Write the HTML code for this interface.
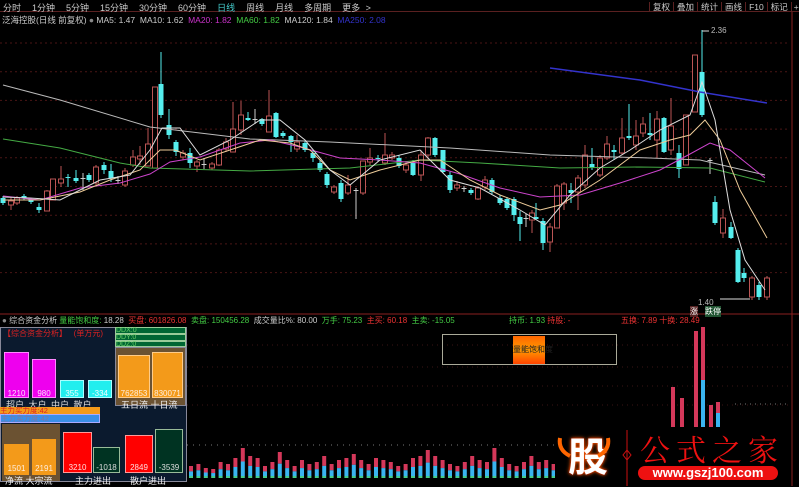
<!DOCTYPE html>
<html><head><meta charset="utf-8">
<style>
*{margin:0;padding:0;box-sizing:border-box}
body{width:799px;height:486px;background:#000;overflow:hidden;position:relative;font-family:"Liberation Sans","Noto Sans CJK SC",sans-serif;font-size:9px;color:#ccc}
.a{position:absolute;white-space:nowrap}
svg{position:absolute;left:0;top:0}
</style></head><body>
<svg id="s" width="799" height="486" viewBox="0 0 799 486"></svg>

<div class="a" style="left:0;top:0;width:799px;height:12px;border-bottom:1px solid #5a2020;"></div>
<div class="a" style="left:3px;top:1px;color:#ccc;word-spacing:3px">分时&nbsp; 1分钟&nbsp; 5分钟&nbsp; 15分钟&nbsp; 30分钟&nbsp; 60分钟&nbsp; <span style="color:#4cc">日线</span>&nbsp; 周线&nbsp; 月线&nbsp; 多周期&nbsp; 更多 &gt;</div>
<div class="a" style="left:649px;top:1px;color:#ccc;font-size:8.5px">
<span style="border-left:1px solid #5a2020;padding:0 3px">复权</span><span style="border-left:1px solid #5a2020;padding:0 3px">叠加</span><span style="border-left:1px solid #5a2020;padding:0 3px">统计</span><span style="border-left:1px solid #5a2020;padding:0 3px">画线</span><span style="border-left:1px solid #5a2020;padding:0 3px">F10</span><span style="border-left:1px solid #5a2020;padding:0 3px">标记</span><span style="border-left:1px solid #5a2020;padding:0 2px">+自选</span></div>
<div class="a" style="left:2px;top:14px;color:#ccc;font-size:8.5px">泛海控股(日线 前复权) <span style="color:#888">●</span> MA5: 1.47&nbsp; MA10: 1.62&nbsp; <span style="color:#c3c">MA20: 1.82</span>&nbsp; <span style="color:#4c4">MA60: 1.82</span>&nbsp; MA120: 1.84&nbsp; <span style="color:#33c">MA250: 2.08</span></div>
<div class="a" style="left:711px;top:26px;color:#bbb;font-size:8px">2.36</div>
<div class="a" style="left:698px;top:298px;color:#bbb;font-size:8px">1.40</div>
<div class="a" style="left:690px;top:306px;font-size:8px;color:#fff;background:#522">涨</div>
<div class="a" style="left:705px;top:306px;font-size:8px;color:#fff;background:#253">跌停</div>

<div class="a" style="left:2px;top:315px;color:#ccc;font-size:8px"><span style="color:#888">●</span> 综合资金分析 <span style="color:#4c4">量能饱和度:</span> 18.28&nbsp; <span style="color:#e33">买盘:</span> <span style="color:#e33">601826.08</span>&nbsp; <span style="color:#4c4">卖盘:</span> <span style="color:#4c4">150456.28</span>&nbsp; 成交量比%: 80.00&nbsp; <span style="color:#4c4">万手:</span> <span style="color:#4c4">75.23</span>&nbsp; <span style="color:#e33">主买: 60.18</span>&nbsp; <span style="color:#4c4">主卖: -15.05</span></div>
<div class="a" style="left:509px;top:315px;color:#4c4;font-size:8px">持币: 1.93 <span style="color:#e33">持股: -</span></div>
<div class="a" style="left:621px;top:315px;color:#e33;font-size:8px">五换: 7.89 十换: 28.49</div>

<!-- left panel -->
<div class="a" style="left:0;top:327px;width:187px;height:155px;background:#0b1a2e;border:1px solid #889"></div>
<div class="a" style="left:3px;top:328px;color:#d22;font-size:8px">【综合资金分析】&nbsp;&nbsp; (单万元)</div>
<div class="a" style="left:4px;top:352px;width:25px;height:46px;background:#e0e;border:1px solid #f8f;color:#fdf;font-size:8px;padding-top:36px;text-align:center">1210</div>
<div class="a" style="left:32px;top:359px;width:24px;height:39px;background:#e0e;border:1px solid #f8f;color:#fdf;font-size:8px;padding-top:29px;text-align:center">980</div>
<div class="a" style="left:60px;top:380px;width:24px;height:18px;background:#2ee;border:1px solid #aff;color:#eff;font-size:8px;padding-top:8px;text-align:center">355</div>
<div class="a" style="left:88px;top:380px;width:24px;height:18px;background:#2ee;border:1px solid #aff;color:#eff;font-size:8px;padding-top:8px;text-align:center">-334</div>
<div class="a" style="left:6px;top:398px;color:#ddd;font-size:9px;word-spacing:2px">超户 大户 中户 散户</div>
<div class="a" style="left:115px;top:327px;width:71px;height:7px;background:#063;border:1px solid #9c9;color:#6c6;font-size:7px;line-height:5px">DDX:0</div>
<div class="a" style="left:115px;top:334px;width:71px;height:7px;background:#063;border:1px solid #9c9;color:#6c6;font-size:7px;line-height:5px">DDY:0</div>
<div class="a" style="left:115px;top:341px;width:71px;height:6px;background:#063;border:1px solid #9c9;color:#6c6;font-size:7px;line-height:5px">DDZ:0</div>
<div class="a" style="left:115px;top:347px;width:71px;height:59px;background:#6b5232;border:1px solid #889"></div>
<div class="a" style="left:118px;top:355px;width:32px;height:43px;background:#f39a1a;border:1px solid #fc8;color:#fed;font-size:8px;padding-top:33px;text-align:center">762853</div>
<div class="a" style="left:152px;top:352px;width:31px;height:46px;background:#f39a1a;border:1px solid #fc8;color:#fed;font-size:8px;padding-top:36px;text-align:center">830071</div>
<div class="a" style="left:121px;top:398px;color:#eee;font-size:9px">五日流 十日流</div>
<div class="a" style="left:0;top:407px;width:100px;height:7px;background:#f39a1a;color:#d22;font-size:7.5px;line-height:7px">主力买力度:42</div>
<div class="a" style="left:0;top:414px;width:100px;height:9px;background:#3a8fe8;border:1px solid #aaf;color:#77a;font-size:7.5px;line-height:7px">主力卖力度:42</div>
<div class="a" style="left:2px;top:424px;width:58px;height:57px;background:#6b5232"></div>
<div class="a" style="left:4px;top:444px;width:25px;height:31px;background:#f39a1a;color:#fed;font-size:8px;padding-top:20px;text-align:center">1501</div>
<div class="a" style="left:32px;top:439px;width:24px;height:36px;background:#f39a1a;color:#fed;font-size:8px;padding-top:25px;text-align:center">2191</div>
<div class="a" style="left:5px;top:474px;color:#eee;font-size:9px">净流 大宗流</div>
<div class="a" style="left:63px;top:432px;width:29px;height:41px;background:#f00;border:1px solid #f99;color:#fdd;font-size:8px;padding-top:30px;text-align:center">3210</div>
<div class="a" style="left:93px;top:447px;width:27px;height:26px;background:#032;border:1px solid #9b9;color:#ddd;font-size:8px;padding-top:15px;text-align:center">-1018</div>
<div class="a" style="left:75px;top:474px;color:#eee;font-size:9px">主力进出</div>
<div class="a" style="left:125px;top:435px;width:28px;height:38px;background:#f00;border:1px solid #f99;color:#fdd;font-size:8px;padding-top:27px;text-align:center">2849</div>
<div class="a" style="left:155px;top:429px;width:28px;height:44px;background:#032;border:1px solid #9b9;color:#ddd;font-size:8px;padding-top:33px;text-align:center">-3539</div>
<div class="a" style="left:130px;top:474px;color:#eee;font-size:9px">散户进出</div>

<!-- saturation box -->
<div class="a" style="left:442px;top:334px;width:175px;height:31px;border:1px solid #aa9"></div>
<div class="a" style="left:513px;top:336px;width:32px;height:28px;background:linear-gradient(#f60,#f90 50%,#f40);color:#222;font-size:8px;line-height:28px;text-align:center">量能饱和度</div>

<!-- watermark -->
<div class="a" style="left:555px;top:427px;width:236px;height:59px;background:#000"></div>
<div class="a" style="left:568px;top:430px;font-size:40px;font-weight:bold;color:#fff;text-shadow:0 0 4px #f60,0 0 2px #f00;font-family:'Noto Sans CJK SC',sans-serif;line-height:48px">股</div>
<div class="a" style="left:640px;top:428px;font-size:30px;color:#e11;font-family:'Noto Serif CJK SC',serif;letter-spacing:6px;line-height:40px">公式之家</div>
<div class="a" style="left:638px;top:466px;width:140px;height:14px;background:#e11;border-radius:7px;color:#fff;font-size:13px;font-weight:bold;text-align:center;line-height:14px">www.gszj100.com</div>

<script>
var s=document.getElementById('s'),h='';
function L(x1,y1,x2,y2,c,w,d){h+='<line x1="'+x1+'" y1="'+y1+'" x2="'+x2+'" y2="'+y2+'" stroke="'+c+'" stroke-width="'+(w||1)+'"'+(d?' stroke-dasharray="'+d+'"':'')+'/>';}
function R(x,y,w,hh,f,st){h+='<rect x="'+x+'" y="'+y+'" width="'+w+'" height="'+hh+'" fill="'+f+'"'+(st?' stroke="'+st+'"':'')+'/>';}
for(var y=43;y<300;y+=28.7)L(0,y,790,y,'#4a1515',1,'2 3');
L(0,314,799,314,'#8a2020',1);L(792,12,792,486,'#8a2020',1);
[345,367,386,405].forEach(function(y){L(187,y,790,y,'#3a1515',1,'1 4')});
L(187,445,555,445,'#777',1,'1 5');
var C=[[3,198,203,196,205,'c'],[11,201,205,197,210,'r'],[17,198,203,196,205,'r'],[24,196,198,194,200,'c'],[31,199,202,198,204,'c'],[39,207,210,203,213,'c'],[47,191,211,190,211,'r'],[53,179,200,179,200,'r'],[61,179,183,166,187,'r'],[68,177,178,174,187,'c'],[76,178,181,170,183,'c'],[83,178,179,173,190,'x'],[89,175,180,173,182,'c'],[96,167,183,165,185,'r'],[104,165,170,162,174,'c'],[111,171,178,164,182,'c'],[118,180,181,176,184,'x'],[125,171,185,168,187,'r'],[133,157,165,150,167,'r'],[140,156,159,146,165,'r'],[148,144,166,128,166,'r'],[155,87,168,87,168,'r'],[161,84,115,52,118,'c'],[169,125,135,109,139,'c'],[176,142,152,140,156,'c'],[183,153,157,150,160,'r'],[190,153,163,148,168,'c'],[197,162,166,160,172,'r'],[204,164,165,158,169,'x'],[212,164,168,162,170,'r'],[219,150,165,148,166,'r'],[226,142,149,138,152,'r'],[233,129,152,102,152,'r'],[241,115,130,101,135,'r'],[248,118,120,112,121,'c'],[255,119,120,109,124,'x'],[262,119,124,118,126,'c'],[269,116,132,90,132,'r'],[276,113,137,112,138,'c'],[283,133,136,131,138,'c'],[291,136,142,135,152,'c'],[297,142,149,135,152,'r'],[305,143,150,141,152,'c'],[313,153,158,150,162,'c'],[320,163,170,160,172,'c'],[327,174,185,172,188,'c'],[334,187,192,185,194,'r'],[341,183,199,180,202,'c'],[348,185,193,175,195,'r'],[356,190,191,188,219,'x'],[363,161,193,161,195,'r'],[370,158,162,148,165,'r'],[378,158,159,155,162,'c'],[385,155,163,133,165,'r'],[392,155,158,152,160,'r'],[399,158,166,155,168,'c'],[406,165,170,161,173,'r'],[413,163,175,160,176,'c'],[421,155,175,150,181,'r'],[428,138,155,137,159,'r'],[435,138,155,137,157,'c'],[443,150,172,150,173,'c'],[450,175,190,172,193,'c'],[457,185,188,181,191,'r'],[464,188,189,186,192,'x'],[471,190,193,188,195,'c'],[478,188,199,186,200,'r'],[485,180,187,176,190,'r'],[492,180,192,178,194,'c'],[500,198,203,195,205,'c'],[507,199,208,197,210,'c'],[514,199,215,197,221,'c'],[520,217,224,211,241,'c'],[526,218,219,214,227,'x'],[532,213,220,210,233,'r'],[536,217,219,203,220,'c'],[543,221,243,218,250,'c'],[550,227,242,223,252,'r'],[557,186,228,184,228,'r'],[564,184,203,182,210,'r'],[571,190,193,183,203,'c'],[578,178,192,175,210,'r'],[585,155,185,145,188,'r'],[592,164,168,148,170,'c'],[600,158,175,155,177,'r'],[607,144,158,136,160,'r'],[614,150,152,145,160,'c'],[622,138,153,118,155,'r'],[629,136,138,104,140,'c'],[636,136,145,120,150,'r'],[643,124,133,117,137,'r'],[650,133,135,113,140,'c'],[657,119,140,111,158,'r'],[664,118,152,117,153,'c'],[671,126,150,98,155,'r'],[679,153,169,145,178,'c'],[686,115,165,115,165,'r'],[695,55,112,55,112,'r'],[702,72,115,30,117,'c'],[710,160,161,158,174,'x'],[715,202,223,196,225,'c'],[723,218,233,209,238,'r'],[731,227,238,222,239,'c'],[738,250,282,248,283,'c'],[744,273,278,268,282,'c'],[752,278,297,276,300,'r'],[759,285,297,282,300,'c'],[767,278,297,276,300,'r']];
C.forEach(function(c){var x=c[0],col=c[5]=='r'?'#b55':(c[5]=='c'?'#5ee':'#ccc');
L(x,c[3],x,c[4],col,1);
if(c[5]=='r'){h+='<rect x="'+(x-2.5)+'" y="'+c[1]+'" width="5" height="'+Math.max(1,c[2]-c[1])+'" fill="#000" stroke="#b55"/>';}
else R(x-2.5,c[1],5,Math.max(1,c[2]-c[1]),col);});
function P(pts,c,w){h+='<polyline fill="none" stroke="'+c+'" stroke-width="'+(w||1)+'" points="'+pts+'"/>';}
P('3,85 60,100 150,127 250,139 330,142 450,148 550,155 650,158 700,160 765,175','#bbb');
P('3,139 60,148 120,163 150,168 250,171 350,168 420,160 480,163 560,168 640,167 710,168 765,182','#4a4');
P('550,68 640,80 700,92 767,103','#33c',1.5);
P('3,196 40,200 80,188 120,183 150,174 170,162 200,157 240,143 270,140 300,147 340,158 380,160 420,163 460,174 500,188 540,197 580,195 620,183 660,170 690,154 710,143 730,150 765,178','#c4c');
P('3,200 40,200 80,192 110,180 140,170 160,150 175,150 200,160 230,150 260,140 290,143 310,150 330,170 350,180 380,170 420,160 440,160 470,180 500,195 540,210 560,205 600,180 640,150 670,140 690,135 705,120 720,140 740,190 767,238','#ec9');
P('3,197 30,198 60,200 100,180 130,175 150,150 162,128 180,128 200,155 230,140 260,120 280,120 305,140 330,170 350,185 380,160 420,150 450,180 480,188 520,210 545,225 570,195 600,168 630,150 660,130 690,115 702,82 715,120 730,210 745,260 765,290','#ddd');
L(720,299,750,299,'#ddd',1);L(702,31,709,31,'#ddd',1);
for(var i=0;i<50;i++){var x=189+i*7.4,hh=[12,14,10,9,16,14,20,30,22,20,12,16,26,18,12,18,14,16,22,14,18,20,24,18,14,20,18,16,12,14,20,22,28,22,18,14,12,16,22,18,16,30,20,14,12,16,22,16,18,14][i],cy=hh*0.55;
R(x,478-hh,4,hh-cy,'#d4385a');R(x,478-cy,4,cy-2,'#3ab4f0');R(x,476,4,2,'#4c8');}
[[671,387,430],[680,398,430],[694,331,430],[701,327,380],[709,405,430],[716,402,413]].forEach(function(b){R(b[0],b[1],4,430-b[1],'#d4385a');if(b[0]==701)R(b[0],380,4,50,'#3ab4f0');if(b[0]==716)R(716,413,4,17,'#3ab4f0');});
L(735,404,790,404,'#777',1,'1 4');
s.innerHTML=h;
</script>
<svg width="799" height="486" style="pointer-events:none">
<line x1="627" y1="430" x2="627" y2="486" stroke="#c11"/>
<polygon points="627,450 631,455 627,460 623,455" fill="none" stroke="#c11"/>
<path d="M560 438 q-2 12 10 18 M608 438 q2 12 -10 18" stroke="#f60" stroke-width="4" fill="none"/>
</svg>
</body></html>
